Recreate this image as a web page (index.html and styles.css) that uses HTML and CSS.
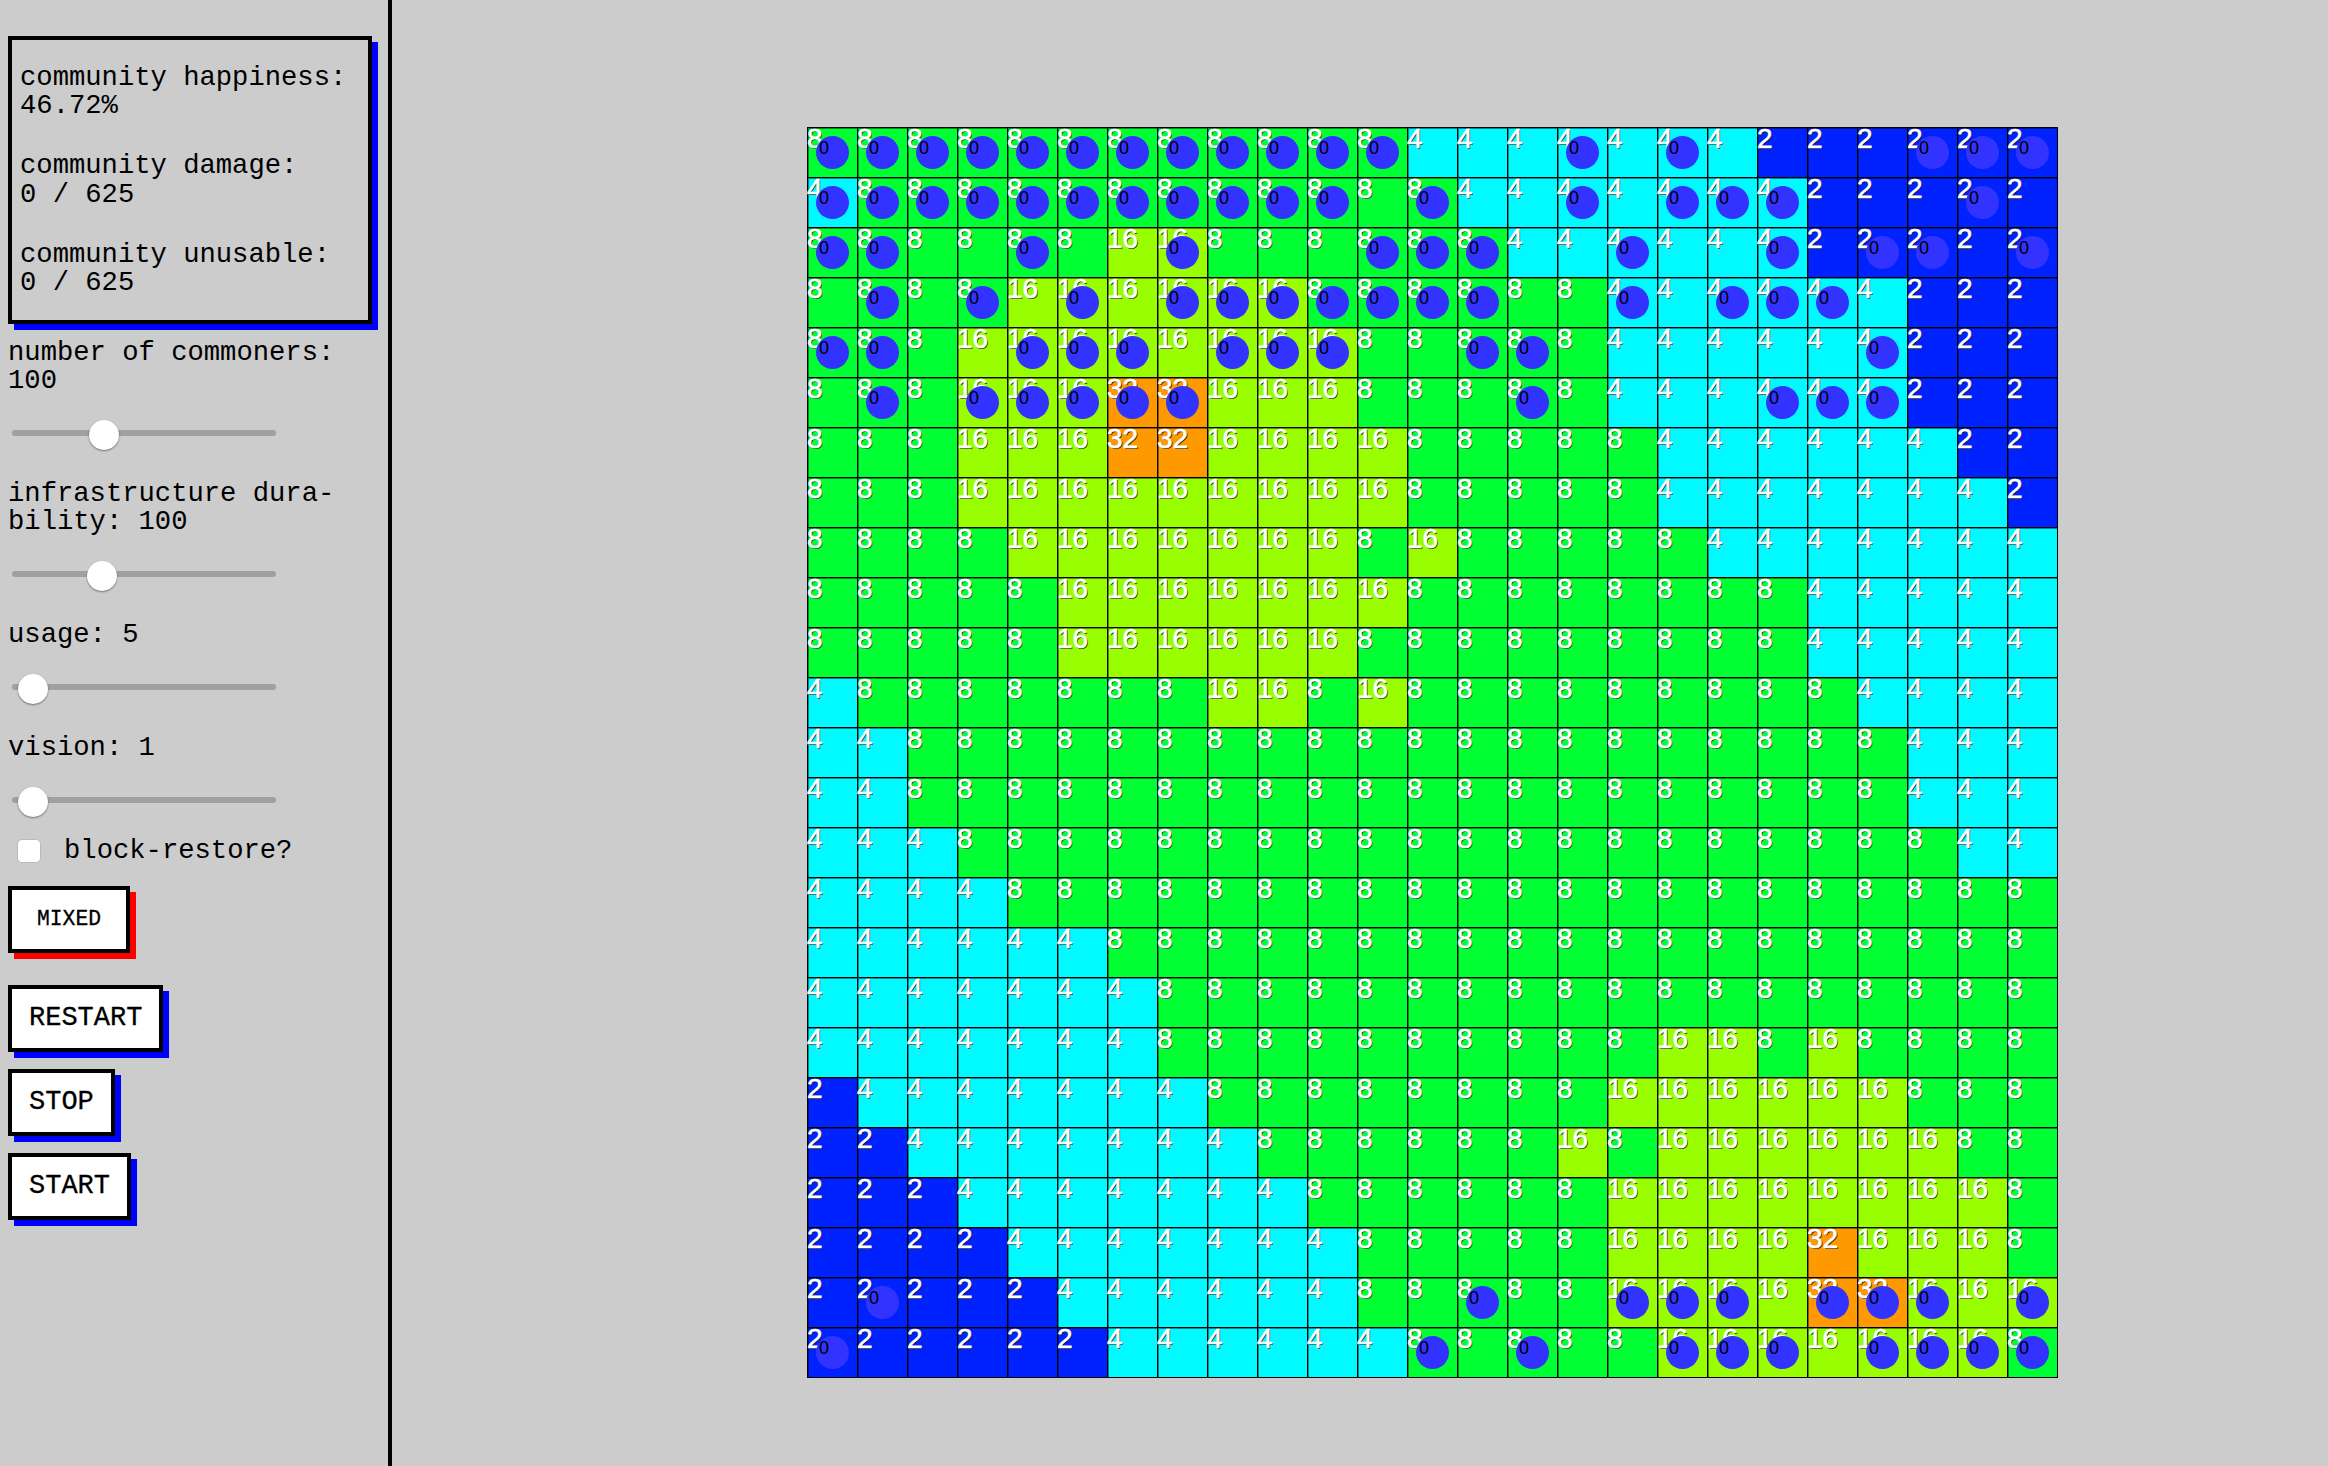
FILE: index.html
```html
<!DOCTYPE html>
<html lang="en">
<head>
<meta charset="utf-8">
<title>Commons</title>
<link rel="stylesheet" href="styles.css">
</head>
<body>
<div class="app">
  <aside class="sidebar">
    <section class="stats">
      <p>community happiness:<br>46.72%</p>
      <p>community damage:<br>0 / 625</p>
      <p>community unusable:<br>0 / 625</p>
    </section>
    <label class="field field-first" for="commoners">number of commoners:<br>100</label>
    <input class="slider slider-first" id="commoners" type="range" min="0" max="1000" value="329">
    <label class="field field-second" for="durability">infrastructure dura-<br>bility: 100</label>
    <input class="slider" id="durability" type="range" min="0" max="1000" value="320">
    <label class="field" for="usage">usage: 5</label>
    <input class="slider" id="usage" type="range" min="0" max="1000" value="26">
    <label class="field" for="vision">vision: 1</label>
    <input class="slider" id="vision" type="range" min="0" max="1000" value="26">
    <label class="check-row"><input class="check" type="checkbox"><span>block-restore?</span></label>
    <div class="actions">
      <button class="btn btn-mode" type="button">MIXED</button>
      <button class="btn btn-restart" type="button">RESTART</button>
      <button class="btn" type="button">STOP</button>
      <button class="btn" type="button">START</button>
    </div>
  </aside>
  <main class="stage">
    <div class="grid" id="grid"></div>
  </main>
</div>
<script src="app.js"></script>
</body>
</html>
```
FILE: styles.css
```css
* { box-sizing: border-box; }
html, body { margin: 0; height: 100%; }
body {
  background: #ccc;
  color: #000;
  font-family: "Liberation Mono", "Courier New", monospace;
  font-size: 27.2px;
  line-height: 28.5px;
}
.app { display: flex; height: 1466px; overflow: hidden; }
.sidebar {
  flex: 0 0 392px;
  padding: 36px 8px 0;
  border-right: 4px solid #000;
}
.stats {
  width: 364px;
  height: 288px;
  padding: 23.5px 8px 0;
  border: 4px solid #000;
  box-shadow: 6px 6px 0 #00f;
}
.stats p { margin: 0 0 31.5px; }
.field { display: block; margin-top: 32.25px; }
.field-first { margin-top: 14.75px; }
.field-second { margin-top: 31.5px; }
.slider {
  display: block;
  -webkit-appearance: none;
  appearance: none;
  width: 264px;
  height: 30px;
  margin: 22.25px 0 0 4px;
  background: transparent;
}
.slider::-webkit-slider-runnable-track {
  height: 6px;
  border-radius: 3px;
  background: #a0a0a0;
}
.slider::-webkit-slider-thumb {
  -webkit-appearance: none;
  appearance: none;
  width: 30px;
  height: 30px;
  margin-top: -10px;
  border-radius: 50%;
  background: #fff;
  box-shadow: 0 1px 2px rgba(0, 0, 0, .45);
}
.check-row { display: flex; align-items: center; gap: 23px; margin-top: 22.4px; padding-left: 9px; }
.check {
  -webkit-appearance: none;
  appearance: none;
  width: 24px;
  height: 24px;
  margin: 0;
  border: 1px solid #bbb;
  border-radius: 5px;
  background: #fff;
}
.actions { display: flex; flex-direction: column; align-items: flex-start; margin-top: 20px; }
.btn {
  height: 67.67px;
  padding: 0 17px;
  margin-bottom: 16.33px;
  border: 4px solid #000;
  border-radius: 0;
  background: #fff;
  color: #000;
  font: 27px "Liberation Mono", "Courier New", monospace;
  -webkit-text-stroke: .3px #000;
  box-shadow: 6px 6px 0 #00f;
}
.btn-mode { padding: 0 25px; margin-bottom: 31.33px; font-size: 21.33px; box-shadow: 6px 6px 0 #f00; }
.stage { flex: 1; padding: 127px 0 0 415px; }
.grid {
  display: grid;
  grid-template-columns: repeat(25, 50px);
  grid-auto-rows: 50px;
  width: 1251px;
  border-right: 1px solid #000;
  border-bottom: 1px solid #000;
  font-family: "Liberation Sans", Arial, sans-serif;
}
.cell {
  position: relative;
  border-left: 1px solid #000;
  border-top: 1px solid #000;
  box-shadow: inset 1px 1px 0 rgba(0, 0, 0, .45);
}
.v2 { background: #0022ff; }
.v4 { background: #00faff; }
.v8 { background: #00ff33; }
.v16 { background: #99ff00; }
.v32 { background: #ff9900; }
.value {
  display: block;
  margin-left: -1px;
  color: #fff;
  font-size: 28px;
  line-height: 22px;
  -webkit-text-stroke: .6px #fff;
  text-shadow: 1px 1px 0 rgba(0, 0, 0, .8);
}
.agent {
  position: absolute;
  left: 7.5px;
  top: 7.5px;
  width: 33px;
  height: 33px;
  padding: 2px 0 0 3.5px;
  border-radius: 50%;
  background: #3333ff;
  color: #000;
  font-size: 18px;
  line-height: 21px;
}
```
FILE: app.js
```js
var ROWS = [
  "CCCCCCCCCCCCbbbBbBbaaaAAA",
  "BCCCCCCCCCCcCbbBbBBBaaaAa",
  "CCccCcdDcccCCCbbBbbBaAAaA",
  "cCcCdDdDDDCCCCccBbBBBbaaa",
  "CCcdDDDdDDDccCCcbbbbbBaaa",
  "cCcDDDEEdddcccCcbbbBBBaaa",
  "cccdddeeddddcccccbbbbbbaa",
  "cccdddddddddcccccbbbbbbba",
  "ccccdddddddcdcccccbbbbbbb",
  "cccccdddddddccccccccbbbbb",
  "cccccddddddcccccccccbbbbb",
  "bcccccccddcdcccccccccbbbb",
  "bbccccccccccccccccccccbbb",
  "bbccccccccccccccccccccbbb",
  "bbbccccccccccccccccccccbb",
  "bbbbccccccccccccccccccccc",
  "bbbbbbccccccccccccccccccc",
  "bbbbbbbcccccccccccccccccc",
  "bbbbbbbccccccccccddcdcccc",
  "abbbbbbbccccccccddddddccc",
  "aabbbbbbbccccccdcddddddcc",
  "aaabbbbbbbccccccddddddddc",
  "aaaabbbbbbbcccccddddedddc",
  "aAaaabbbbbbccCccDDDdEEDdD",
  "AaaaaabbbbbbCcCccDDDdDDDC"
];
var VALUES = { a: 2, b: 4, c: 8, d: 16, e: 32 };
var grid = document.getElementById("grid");

ROWS.forEach(function (row) {
  row.split("").forEach(function (ch) {
    var value = VALUES[ch.toLowerCase()];
    var cell = document.createElement("div");
    cell.className = "cell v" + value;
    var label = document.createElement("span");
    label.className = "value";
    label.textContent = value;
    cell.appendChild(label);
    if (ch !== ch.toLowerCase()) {
      var agent = document.createElement("span");
      agent.className = "agent";
      agent.textContent = "0";
      cell.appendChild(agent);
    }
    grid.appendChild(cell);
  });
});
```
